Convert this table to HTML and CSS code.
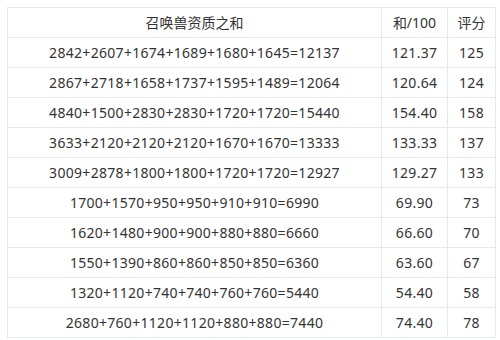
FILE: index.html
```html
<!DOCTYPE html>
<html lang="zh">
<head>
<meta charset="utf-8">
<link rel="stylesheet" href="styles.css">
</head>
<body>
<div class="table">
  <div class="cell head">召唤兽资质之和</div><div class="cell head">和/100</div><div class="cell head">评分</div>
  <div class="cell num">2842+2607+1674+1689+1680+1645=12137</div><div class="cell num">121.37</div><div class="cell num">125</div>
  <div class="cell num">2867+2718+1658+1737+1595+1489=12064</div><div class="cell num">120.64</div><div class="cell num">124</div>
  <div class="cell num">4840+1500+2830+2830+1720+1720=15440</div><div class="cell num">154.40</div><div class="cell num">158</div>
  <div class="cell num">3633+2120+2120+2120+1670+1670=13333</div><div class="cell num">133.33</div><div class="cell num">137</div>
  <div class="cell num">3009+2878+1800+1800+1720+1720=12927</div><div class="cell num">129.27</div><div class="cell num">133</div>
  <div class="cell num">1700+1570+950+950+910+910=6990</div><div class="cell num">69.90</div><div class="cell num">73</div>
  <div class="cell num">1620+1480+900+900+880+880=6660</div><div class="cell num">66.60</div><div class="cell num">70</div>
  <div class="cell num">1550+1390+860+860+850+850=6360</div><div class="cell num">63.60</div><div class="cell num">67</div>
  <div class="cell num">1320+1120+740+740+760+760=5440</div><div class="cell num">54.40</div><div class="cell num">58</div>
  <div class="cell num">2680+760+1120+1120+880+880=7440</div><div class="cell num">74.40</div><div class="cell num">78</div>
</div>
</body>
</html>
```

FILE: styles.css
```css
html, body {
  margin: 0;
  padding: 0;
  background: #ffffff;
}
body {
  padding: 7px;
  font-family: "Noto Sans", "Noto Sans CJK SC", sans-serif;
  font-size: 14px;
  color: #333333;
}
.table {
  display: grid;
  grid-template-columns: 374px 66px 48px;
  width: 488px;
  border-left: 1px solid #e3e9f1;
  border-top: 1px solid #e3e9f1;
}
.cell {
  height: 29px;
  line-height: 29px;
  text-align: center;
  white-space: nowrap;
  border-right: 1px solid #e3e9f1;
  border-bottom: 1px solid #e3e9f1;
}
.num {
  letter-spacing: 0.3px;
}
```
